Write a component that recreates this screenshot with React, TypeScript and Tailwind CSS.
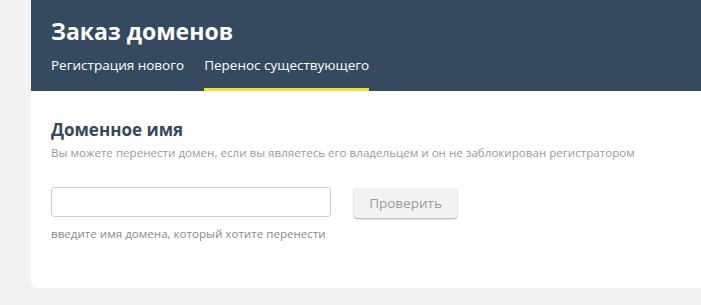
export default function App() {
  return (
    <div className="min-h-[305px] w-[701px] bg-[#f2f2f2] pl-[31px] font-['Open_Sans',sans-serif]">
      <div className="h-[288px] rounded-bl-[6px] bg-white">
        <div className="h-[91px] bg-[#354a5e] pl-[20px] pt-[13px] text-white">
          <h1 className="text-[23px] font-bold leading-[36px]">Заказ доменов</h1>
          <div className="mt-[3px] flex gap-[20px] text-[13.5px]">
            <div className="h-[39px] pt-[3px]">Регистрация нового</div>
            <div className="h-[39px] border-b-[3px] border-[#e9e23a] pt-[3px]">Перенос существующего</div>
          </div>
        </div>
        <div className="px-[20px] pt-[27px]">
          <h2 className="text-[17px] font-bold leading-[24px] text-[#34495e]">Доменное имя</h2>
          <p className="mt-[3px] text-[11.6px] leading-[15px] text-[#9a9a9a]">
            Вы можете перенести домен, если вы являетесь его владельцем и он не заблокирован регистратором
          </p>
          <div className="mt-[27px] flex items-start gap-[23px]">
            <div>
              <input className="h-[30px] w-[280px] rounded-[3px] border border-[#cfcfcf] bg-white px-2 text-[13px] outline-none" />
              <div className="mt-[9px] text-[11.6px] leading-[15px] text-[#8a8a8a]">
                введите имя домена, который хотите перенести
              </div>
            </div>
            <button className="mt-[1px] h-[30px] w-[103px] rounded-[3px] bg-[#f3f3f3] text-[13.5px] text-[#9a9a9a] shadow-[0_1px_2px_rgba(0,0,0,0.35)]">
              Проверить
            </button>
          </div>
        </div>
      </div>
    </div>
  );
}
